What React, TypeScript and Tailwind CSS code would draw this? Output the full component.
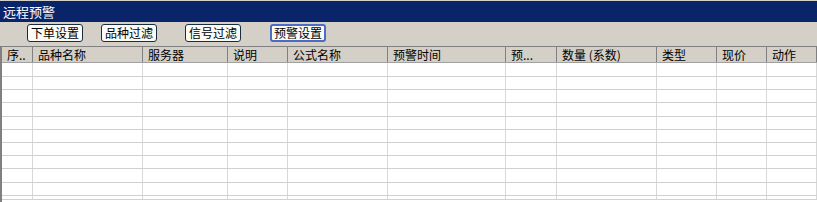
import React from 'react';

const columns = [
  { label: '序..', w: 33 },
  { label: '品种名称', w: 110 },
  { label: '服务器', w: 85 },
  { label: '说明', w: 60 },
  { label: '公式名称', w: 100 },
  { label: '预警时间', w: 118 },
  { label: '预...', w: 51 },
  { label: '数量 (系数)', w: 100 },
  { label: '类型', w: 60 },
  { label: '现价', w: 50 },
  { label: '动作', w: 0 },
];

const buttons = [
  { label: '下单设置', ml: 'ml-[27px]', active: false },
  { label: '品种过滤', ml: 'ml-[18px]', active: false },
  { label: '信号过滤', ml: 'ml-[28px]', active: false },
  { label: '预警设置', ml: 'ml-[29px]', active: true },
];

const rowHeights = [14, 13, 13, 14, 13, 13, 13, 13, 14, 13];

export default function App() {
  return (
    <div
      className="w-[817px] h-[202px] overflow-hidden bg-white text-[12px] text-black flex flex-col"
      style={{ fontFamily: '"Noto Sans CJK SC", "DejaVu Sans", sans-serif' }}
    >
      <div className="h-px bg-[#d4d0c8]" />
      <div className="h-[21px] bg-[#0a246a] text-white text-[13px] leading-[21px] pl-[3px]">远程预警</div>

      <div className="h-[24px] bg-[#d4d0c8] flex items-start pt-[2px]">
        {buttons.map((b) => (
          <button
            key={b.label}
            className={`${b.ml} w-[56px] h-[18px] rounded-[3px] bg-[#fbfbf8] leading-[14px] text-[12px] flex items-center justify-center ${
              b.active ? 'border-2 border-[#4a6cc4]' : 'border border-[#1c2c40]'
            }`}
          >
            {b.label}
          </button>
        ))}
      </div>

      <div className="flex-1 flex flex-col border-l-2 border-[#808080] bg-white">
        <div className="h-[17px] shrink-0 flex bg-[#d4d0c8] border-t border-[#808080] border-b border-b-[#a0a0a0]">
          {columns.map((c, i) => (
            <div
              key={i}
              className={`${c.w ? '' : 'flex-1'} h-full flex items-center pl-[5px] border-r border-[#808080] leading-none whitespace-nowrap overflow-hidden`}
              style={c.w ? { width: i === 0 ? c.w - 2 : c.w } : undefined}
            >
              {c.label}
            </div>
          ))}
        </div>
        {rowHeights.map((h, r) => (
          <div key={r} className="shrink-0 flex border-b border-[#d0d0d0]" style={{ height: h }}>
            {columns.map((c, i) => (
              <div
                key={i}
                className={`${c.w ? '' : 'flex-1'} h-full border-r border-[#d8d8d8]`}
                style={c.w ? { width: i === 0 ? c.w - 2 : c.w } : undefined}
              />
            ))}
          </div>
        ))}
        <div className="h-[4px] shrink-0 flex border-b border-[#d0d0d0]">
          {columns.map((c, i) => (
            <div
              key={i}
              className={`${c.w ? '' : 'flex-1'} h-full border-r border-[#d8d8d8]`}
              style={c.w ? { width: i === 0 ? c.w - 2 : c.w } : undefined}
            />
          ))}
        </div>
      </div>
    </div>
  );
}
